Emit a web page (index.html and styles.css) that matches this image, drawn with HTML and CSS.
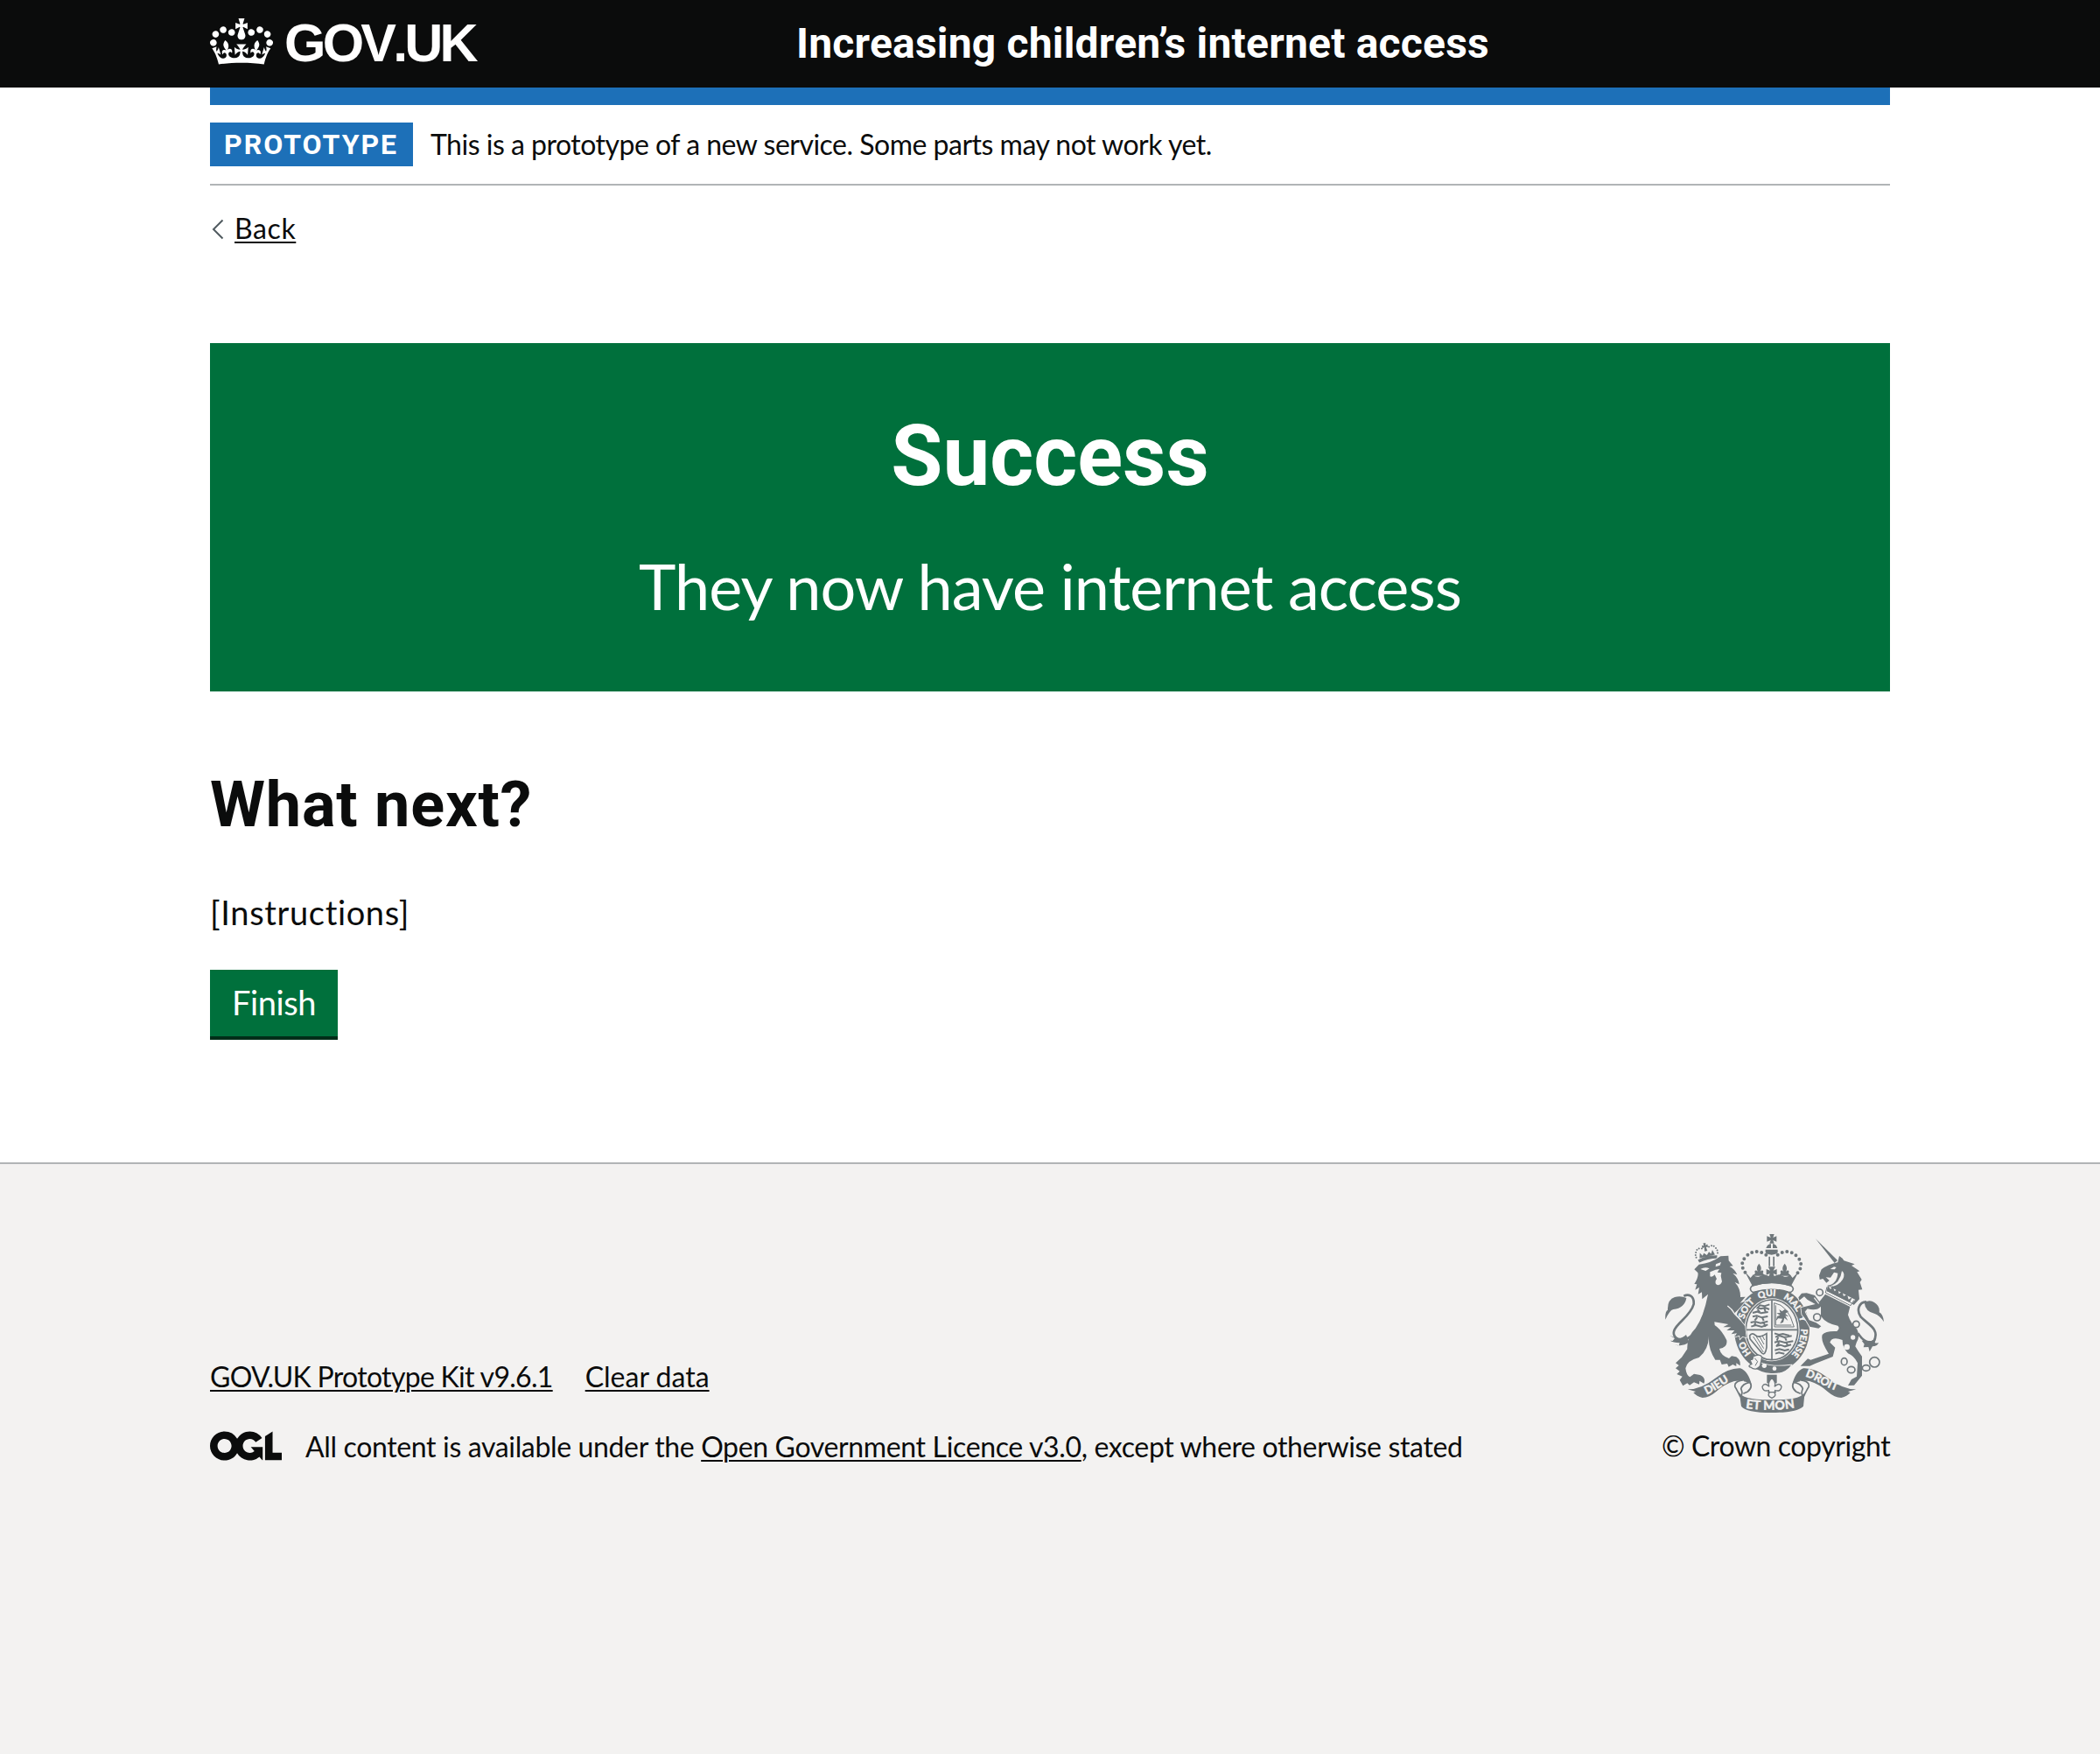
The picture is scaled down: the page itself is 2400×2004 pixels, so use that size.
FILE: index.html
```html
<!DOCTYPE html>
<html lang="en">
<head>
<meta charset="utf-8">
<title>Success - Increasing children’s internet access</title>
<link rel="stylesheet" href="styles.css">
</head>
<body>
<header class="header">
  <div class="container header-row">
    <a class="logo" href="#">
      <svg class="crown" viewBox="0 0 132 97" aria-hidden="true"><path d="M25 30.2c3.5 1.5 7.7-.2 9.1-3.7 1.5-3.6-.2-7.8-3.9-9.2-3.6-1.4-7.6.3-9.1 3.9-1.4 3.5.3 7.5 3.9 9zM9 39.5c3.6 1.5 7.8-.2 9.2-3.7 1.5-3.6-.2-7.8-3.9-9.1-3.6-1.5-7.6.2-9.1 3.8-1.4 3.5.3 7.5 3.8 9zM4.4 57.2c3.5 1.5 7.7-.2 9.1-3.8 1.5-3.6-.2-7.7-3.9-9.1-3.5-1.5-7.6.3-9.1 3.8-1.4 3.5.3 7.6 3.9 9.1zm38.3-21.4c3.5 1.5 7.7-.2 9.1-3.8 1.5-3.6-.2-7.7-3.9-9.1-3.6-1.5-7.6.3-9.1 3.8-1.3 3.6.4 7.7 3.9 9.1zm64.4-5.6c-3.6 1.5-7.8-.2-9.1-3.7-1.5-3.6.2-7.8 3.8-9.2 3.6-1.4 7.7.3 9.2 3.9 1.3 3.5-.4 7.5-3.9 9zm15.9 9.3c-3.6 1.5-7.7-.2-9.1-3.7-1.5-3.6.2-7.8 3.7-9.1 3.6-1.5 7.7.2 9.2 3.8 1.5 3.5-.3 7.5-3.8 9zm4.7 17.7c-3.6 1.5-7.8-.2-9.2-3.8-1.5-3.6.2-7.7 3.9-9.1 3.6-1.5 7.7.3 9.2 3.8 1.3 3.5-.4 7.6-3.9 9.1zM89.3 35.8c-3.6 1.5-7.8-.2-9.2-3.8-1.4-3.6.2-7.7 3.9-9.1 3.6-1.5 7.7.3 9.2 3.8 1.4 3.6-.3 7.7-3.9 9.1zM69.7 17.7l8.9 4.7V9.3l-8.9 2.8c-.2-.3-.5-.6-.9-.9L72.4 0H59.6l3.5 11.2c-.3.3-.6.5-.9.9l-8.8-2.8v13.1l8.8-4.7c.3.3.6.7.9.9l-5 15.4v.1c-.2.8-.4 1.6-.4 2.4 0 4.1 3.1 7.5 7 8.1h.2c.3 0 .7.1 1 .1.4 0 .7 0 1-.1h.2c4-.6 7.1-4.1 7.1-8.1 0-.8-.1-1.7-.4-2.4V34l-5.1-15.4c.4-.2.7-.6 1-.9zM66 92.8c16.9 0 32.8 1.1 47.1 3.2 4-16.9 8.9-26.7 14-33.5l-9.6-3.4c1 4.9 1.1 7.2 0 10.2-1.5-1.4-3-4.3-4.2-8.7L108.6 76c2.8-2 5-3.2 7.5-3.3-4.4 9.4-10 11.9-13.6 11.2-4.3-.8-6.3-4.6-5.6-7.9 1-4.7 5.7-5.9 8-.5 4.3-8.7-3-11.4-7.6-8.8 7.1-7.2 7.9-13.5 2.1-21.1-8 6.1-8.1 12.3-4.5 20.8-4.7-5.4-12.1-2.5-9.5 6.2 3.4-5.2 7.9-2 7.2 3.1-.6 4.3-6.4 7.8-13.5 7.2-10.3-.9-10.9-8-11.2-13.8 2.5-.5 7.1 1.8 11 7.3L80.2 60c-4.1 4.4-8 5.3-12.3 5.4 1.4-4.4 8-11.6 8-11.6H55.5s6.4 7.2 7.9 11.6c-4.2-.1-8-1-12.3-5.4l1.4 16.4c3.9-5.5 8.5-7.7 10.9-7.3-.3 5.8-.9 12.8-11.1 13.8-7.2.6-12.9-2.9-13.5-7.2-.7-5 3.8-8.3 7.1-3.1 2.7-8.7-4.6-11.6-9.4-6.2 3.7-8.5 3.6-14.7-4.6-20.8-5.8 7.6-5 13.9 2.2 21.1-4.7-2.6-11.9.1-7.7 8.8 2.3-5.5 7.1-4.2 8.1.5.7 3.3-1.3 7.1-5.7 7.9-3.5.7-9-1.8-13.5-11.2 2.5.1 4.7 1.3 7.5 3.3l-4.7-15.4c-1.2 4.4-2.7 7.2-4.3 8.7-1.1-3-.9-5.3 0-10.2l-9.5 3.4c5 6.9 9.9 16.7 14 33.5 14.8-2.1 30.8-3.2 47.7-3.2z"/></svg>
      <span class="wordmark">GOV.UK</span>
    </a>
    <a class="service" href="#">Increasing children’s internet access</a>
  </div>
</header>
<div class="container">
  <div class="bar"></div>
  <div class="phase">
    <strong class="tag">PROTOTYPE</strong>
    <span class="phase-text">This is a prototype of a new service. Some parts may not work yet.</span>
  </div>
  <a class="back" href="#">
    <svg class="chevron" viewBox="0 0 14 24" aria-hidden="true"><path d="M12.500 1.500 2 12l10.500 10.500"/></svg>
    <span class="back-text">Back</span>
  </a>
  <main class="main">
    <section class="panel">
      <h1 class="panel-title">Success</h1>
      <div class="panel-body">They now have internet access</div>
    </section>
    <h2 class="heading">What next?</h2>
    <p class="para">[Instructions]</p>
    <button class="button">Finish</button>
  </main>
</div>
<footer class="footer">
  <div class="container footer-row">
    <div class="meta">
      <div class="links"><a class="kit" href="#">GOV.UK Prototype Kit v9.6.1</a><a href="#">Clear data</a></div>
      <div class="licence">
        <svg class="ogl" viewBox="0 0 483.2 195.7" aria-hidden="true"><path d="M421.5 142.8V.1l-50.7 32.3v161.1h112.4v-50.7zm-122.3-9.6A47.12 47.12 0 0 1 221 97.8c0-26 21.1-47.1 47.1-47.1 16.7 0 31.4 8.7 39.7 21.8l42.7-27.2A97.63 97.63 0 0 0 268.1 0c-36.5 0-68.3 20.1-85.1 49.7A98 98 0 0 0 97.8 0C43.9 0 0 43.9 0 97.8s43.9 97.8 97.8 97.8c36.5 0 68.3-20.1 85.1-49.7a97.76 97.76 0 0 0 149.6 25.4l19.4 22.2h3v-87.8h-80l24.3 27.5zM97.8 145c-26 0-47.1-21.1-47.1-47.1s21.1-47.1 47.1-47.1 47.1 21.1 47.1 47.1S123.8 145 97.8 145"/></svg>
        <span class="licence-text">All content is available under the <a href="#">Open Government Licence v3.0</a>, except where otherwise stated</span>
      </div>
    </div>
    <div class="copyright">
      <svg class="arms" viewBox="60 51 780 630" aria-hidden="true">
        <defs>
          <path id="garter" pathLength="360" d="M438 502A100 115 0 0 1 438 272A100 115 0 0 1 438 502"/>
          <path id="dieu" d="M214 610C255 594 280 564 330 548"/>
          <path id="droit" d="M552 548C592 558 622 590 690 606"/>
          <path id="mon" d="M348 656Q437 670 536 652"/>
          <path id="fleur" d="M0-22C10-10 8-2 4 6C12-4 18 4 13 11L22 20H-22L-13 11C-18 4-12-4-4 6C-8-2-10-10 0-22Z"/>
        </defs>
        <!-- royal crown -->
        <path d="M430 60h16l-4 12 12-5v19l-12-5 4 11h-16l4-11-13 5v-19l13 5z"/>
        <path d="M431 94h4v14h-17q3-10 13-14zM441 94h4q10 4 12 14h-16zM416 113h42v10q-5 7-21 8-16-1-21-8z"/>
        <path class="beads" d="M418 131Q380 106 348 138Q322 168 354 200M458 131Q494 106 526 138Q552 168 520 200"/>
        <path d="M427 137h5v33h-5zM442 137h5v33h-5z"/>
        <use href="#fleur" x="394" y="183"/><use href="#fleur" x="482" y="183"/>
        <path d="M425 172h25l-7 13 12-5v20l-12-5 4 12h-20l4-12-12 5v-20l13 5z"/>
        <path d="M345 188l20 22 9-11q10 12 24 5l15-5 24 8 24-8 15 5q14 7 24-5l9 11 21-22-27 51q-65-22-131 0z"/>
        <path class="line" d="M372 236Q437 217 503 236Q520 248 502 260Q437 240 373 260Q356 248 372 236Z"/>
        <!-- garter and shield -->
        <ellipse cx="438" cy="387" rx="129" ry="145"/>
        <path class="paper" d="M373 246Q437 228 504 246L498 257Q437 238 378 256Z"/>
        <ellipse class="paper" cx="438" cy="388" rx="95" ry="108"/>
        <g class="motto">
          <text><textPath href="#garter" startOffset="43">HO</textPath></text>
          <text><textPath href="#garter" startOffset="109">SOIT</textPath></text>
          <text><textPath href="#garter" startOffset="156">QUI</textPath></text>
          <text><textPath href="#garter" startOffset="201">MAL</textPath></text>
          <text><textPath href="#garter" startOffset="246">Y</textPath></text>
          <text><textPath href="#garter" startOffset="269">PENSE</textPath></text>
        </g>
        <ellipse class="line" cx="438" cy="388" rx="89" ry="103"/>
        <path class="line" d="M438 286v206M349 388h178"/>
        <path class="rough" d="M430 301l-18 6-15-3-8 9 12 3 14-4 14 6M389 318l8 10M412 314l4 12M372 330l15-4 14 5 24-4M372 343l14-3 18 6 20-4M388 345l-9 11M405 346l5 11M365 363l16-3 18 5 25-6M367 377l16-5 20 6 21-8M382 364l-6 12M410 363l6 15"/>
        <path class="rough" d="M447 400l15 5 14-3 22 6M450 413l14-5 17 6 25-5M460 413l-5 12M482 413l6 12M447 431l17-4 19 5 28-5M452 444l15-4 16 5 21-6M463 431l-8 13M487 430l6 14M448 458l16-4 18 5 15-4M450 470l12-4 19 4"/>
        <path class="thin" d="M446 296Q494 303 514 378H447ZM451 304V372H505"/>
        <path d="M463 318l10 7 9-7 13 7-11 8 12 10-12-3 9 17-12-10-4 15-11 5 8-17-14-1-8 8 4-15 10-4-12-7 13-1z"/>
        <path class="line" d="M362 408Q370 396 382 407T420 401V448Q415 478 404 468L363 419Z"/>
        <path class="thin" d="M374 411l35 54M384 410l26 42M395 409l16 29M405 408l8 15"/>
        <!-- belt and buckle -->
        <path class="halo" d="M378 486Q407 520 504 509Q483 540 435 537Q398 534 369 513Z"/>
        <path class="fleurline" d="M373 480Q397 468 404 482L398 511Q384 531 365 516Q353 513 369 505L362 489Q375 494 373 480Z"/>
        <path class="thin" d="M379 485l10 12-8 14"/>
        <circle class="paper" cx="412" cy="511" r="8"/><circle class="paper" cx="447" cy="521" r="7"/>
        <path d="M421 542h34v29h-34z"/>
        <path class="fleurline" d="M438 553Q454 570 447 583Q464 566 471 583Q470 601 449 596L447 604Q455 615 438 622Q421 615 429 604L427 596Q406 601 405 583Q413 566 429 583Q422 570 438 553ZM424 602H453"/>
        <!-- lion -->
        <g transform="rotate(-13 214 126)">
          <path d="M180 141Q214 133 248 141L245 151Q214 144 183 151ZM187 137l5-18 7 12 6-8 9 9 9-9 6 8 7-12 5 18zM210 90h9l-2 8 7-2v10l-7-2 2 14h-10l2-14-7 2v-10l7 2z"/>
          <path class="beads small" d="M202 106Q185 100 179 115Q172 128 180 140M227 106Q243 100 249 115Q256 128 248 140"/>
        </g>
        <path class="halo" d="M172 181L188 164Q230 160 262 136L289 134 290 151 305 169 293 171Q312 181 319 199L304 194Q324 211 326 232L311 225Q331 247 330 276L347 275 329 296 347 290 326 315 310 331 346 376 350 414 337 411 329 419 327 407 309 413 318 400 299 403 310 390 283 390 298 379 271 379 289 369 241 361 242 372Q266 388 283 424Q287 449 258 453Q263 477 291 486L300 478 316 481Q332 492 329 511L316 502 316 513 304 507 290 515 285 504 266 507 260 491 244 491Q218 451 222 408Q221 457 188 483Q147 493 142 520Q145 545 157 550L171 539 192 543Q213 553 205 572L190 563 189 575 171 568 156 578 148 571 133 580 122 560 131 548 112 540 122 530 108 520 119 510 108 502 129 482 148 454Q146 413 176 383Q204 344 219 266L199 283 198 259 185 266 189 243 175 251 181 232 172 231Q188 205 184 192Z"/>
        <path class="paper" d="M193 180Q209 171 224 178L211 186ZM246 163l18-7-4 11-15 5zM226 190l19-8 13-2-7 11 14 2-2 10 4 20q-8 18-21 8-4-9 3-17l-7-15q-8 10-16 6z"/>
        <path class="paperline" d="M286 306Q302 317 310 333L333 356"/>
        <path class="limb" d="M165 407C126 438 94 414 103 391C111 364 159 342 170 300C172 270 152 265 136 272"/>
        <path d="M73 353Q71 325 81 320Q79 285 105 276Q127 271 145 279Q139 314 100 318Q87 321 73 353ZM88 408l17 9-7 9-9-1q10 6 33 8l-3 9-15-4q28 10 50-8l-10-25q-20 18-39 9z"/>
        <!-- unicorn -->
        <path d="M588 76L663 150 653 159Z"/>
        <path d="M600 202L608 181Q632 163 664 157L669 135 680 143 685 151 722 163 711 168 739 187 730 190 746 216 740 225 748 250 735 251 738 283 719 303 628 236Q661 232 664 194L651 191 639 209 623 208 635 219 625 227 613 213 602 216Z"/>
        <path class="paper" d="M638 180l13-8 8 2-6 7zM678 186q13 10 3 29-16 25-45 25 37-12 42-54z"/>
        <path class="paper" d="M626 235L724 285 706 307 620 262Z"/>
        <path class="thin" d="M627 241L622 261 708 305 720 286M627 254L713 297"/>
        <path d="M630 235l9 15 7-12 7 18 11-9 4 18 11-9 5 17 12-7 5 18 13-8-9 18-79-39z"/>
        <path class="halo" d="M621 266L706 309 699 337Q707 364 730 386Q742 410 728 432L724 445Q738 468 747 479L747 545 720 578 699 579 711 558 729 548 732 502Q720 477 699 469Q679 447 680 423Q644 410 637 431L655 449 647 480 586 504 568 512 536 512 561 487 571 491 633 470Q604 427 611 405Q622 391 661 393Q673 383 664 374Q623 366 606 341L606 308Q593 324 560 316L551 326 566 355 590 364 607 376 598 383 568 377 551 348 541 336 538 312 587 300 560 285 549 274 532 287 529 277 540 263 557 262 585 270 601 292Z"/>
        <circle class="line" cx="602" cy="260" r="11"/>
        <path class="paperline" d="M583 278l16 20"/>
        <ellipse class="ring" cx="593" cy="345" rx="12" ry="12"/>
        <circle class="paper" cx="716" cy="414" r="8"/><circle class="paper" cx="695" cy="447" r="10"/>
        <circle class="ring" cx="727" cy="369" r="11"/><ellipse class="line" cx="686" cy="497" rx="10" ry="12"/><ellipse class="line" cx="710" cy="525" rx="13" ry="11"/><ellipse class="line" cx="761" cy="519" rx="13" ry="10"/><circle class="line" cx="790" cy="499" r="17"/>
        <path class="limb" d="M762 292C736 293 727 321 743 344C768 370 809 386 788 426Q762 443 733 400"/>
        <path d="M822 361Q820 335 806 328Q809 306 789 294Q774 283 755 294Q758 326 791 333Q807 338 822 361ZM746 425l9 12-3 11 17-1 4 16 10-18q16 0 21-13-11 4-13-1l5-14-17 9z"/>
        <!-- motto ribbon -->
        <path d="M149 592Q195 593 247 552Q291 518 330 520Q357 529 370 581Q348 557 309 564Q275 574 244 602Q224 619 200 621Q180 616 169 604L177 600Z"/>
        <path transform="matrix(-1 0 0 1 876 0)" d="M149 592Q195 593 247 552Q291 518 330 520Q357 529 370 581Q348 557 309 564Q275 574 244 602Q224 619 200 621Q180 616 169 604L177 600Z"/>
        <path class="ribbon-fold" d="M342 560Q306 565 312 584Q317 591 329 616Q341 610 332 590Q337 573 362 568Q374 585 355 600L340 607M534 560Q570 565 564 584Q559 591 547 616Q535 610 544 590Q539 573 514 568Q502 585 521 600L536 607"/>
        <path d="M326 600Q332 629 437 628Q544 629 551 600L546 650Q525 672 437 672Q350 672 333 650Z"/>
        <g class="motto big">
          <text><textPath href="#dieu">DIEU</textPath></text>
          <text><textPath href="#droit">DROIT</textPath></text>
          <text class="wide"><textPath href="#mon">ET MON</textPath></text>
        </g>
      </svg>
      <span>© Crown copyright</span>
    </div>
  </div>
</footer>
</body>
</html>
```
FILE: styles.css
```css
* { box-sizing: border-box; }
body {
  margin: 0;
  min-height: 2004px;
  display: flex;
  flex-direction: column;
  background: #fff;
  color: #0b0c0c;
  font-family: Lato, "Noto Sans", sans-serif;
  font-size: 32px;
  font-variant-ligatures: none;
}
a { color: inherit; text-decoration-thickness: 2px; text-underline-offset: 3px; }
.container { width: 1920px; margin: 0 auto; }
.header { height: 100px; background: #0b0c0c; color: #fff; }
.header a { text-decoration: none; }
.header-row { display: grid; grid-template-columns: 670px 1fr; }
.logo { display: flex; gap: 13px; padding-top: 21px; }
.crown { width: 72px; height: 53px; fill: #fff; }
.wordmark { font: bold 61px/57px "Liberation Sans", Arial, sans-serif; font-kerning: none; letter-spacing: -3.8px; }
.service, .tag, .panel-title, .heading { font-family: Roboto, sans-serif; font-weight: 700; }
.service { font-size: 48px; line-height: 99px; letter-spacing: .2px; }
.bar { height: 20px; background: #1d70b8; }
.phase { display: flex; gap: 20px; height: 92px; padding: 20px 0; border-bottom: 2px solid #b1b4b6; }
.phase-text { line-height: 49px; letter-spacing: -.5px; }
.tag { width: 232px; height: 50px; padding-left: 16px; background: #1d70b8; color: #fff; line-height: 50px; letter-spacing: 2px; }
.back { display: flex; width: max-content; height: 40px; margin-top: 28px; gap: 12px; padding-left: 2px; line-height: 42px; text-decoration: none; }
.chevron { width: 14px; height: 24px; margin-top: 10px; fill: none; stroke: #505a5f; stroke-width: 2; }
.back-text { letter-spacing: .6px; text-decoration: underline; text-decoration-thickness: 2px; text-underline-offset: 3px; }
.main { padding-top: 112px; }
.panel { height: 398px; padding-top: 74px; background: #00703c; color: #fff; text-align: center; }
.panel-title { margin: 0 0 43px; font-size: 96px; line-height: 110px; }
.panel-body { font-size: 72px; line-height: 100px; letter-spacing: -.95px; }
.heading { margin: 90px 0 0; font-size: 72px; line-height: 80px; letter-spacing: .8px; }
.para { margin: 57px 0 0; font-size: 38px; line-height: 50px; letter-spacing: .65px; }
.button { display: block; width: 146px; height: 76px; margin: 41px 0 0; padding: 0 0 1px; border: 0; background: #00703c; box-shadow: 0 4px 0 #002d18; color: #fff; font: 38px/73px Lato, sans-serif; letter-spacing: -.4px; }
.footer { flex: 1; margin-top: 144px; padding-top: 77px; border-top: 2px solid #b1b4b6; background: #f3f2f1; }
.footer-row { display: flex; justify-content: space-between; align-items: flex-end; line-height: 42px; }
.links { display: flex; gap: 37px; margin-bottom: 38px; }
.kit { letter-spacing: -.7px; }
.licence { display: flex; gap: 27px; height: 41px; }
.licence-text { letter-spacing: -.35px; }
.ogl { width: 82px; height: 34px; margin-top: 3px; fill: #0b0c0c; }
.copyright { width: 261px; height: 266px; display: flex; flex-direction: column; gap: 14px; white-space: nowrap; letter-spacing: -.42px; }
.arms { flex: none; width: 260px; height: 210px; fill: #6f777b; }
.arms .paper { fill: #f3f2f1; }
.arms .line { fill: none; stroke: #6f777b; stroke-width: 5; }
.arms .ring { fill: #f3f2f1; stroke: #6f777b; stroke-width: 5; }
.arms .thin { fill: none; stroke: #6f777b; stroke-width: 3; }
.arms .rough { fill: none; stroke: #6f777b; stroke-width: 6; }
.arms .limb { fill: none; stroke: #6f777b; stroke-width: 8; }
.arms .paperline { fill: none; stroke: #f3f2f1; stroke-width: 4; }
.arms .fleurline { fill: #f3f2f1; stroke: #6f777b; stroke-width: 4; }
.arms .ribbon-fold { fill: #f3f2f1; stroke: #6f777b; stroke-width: 5; }
.arms .halo { stroke: #f3f2f1; stroke-width: 5; paint-order: stroke; }
.arms .beads { fill: none; stroke: #6f777b; stroke-width: 12; stroke-linecap: round; stroke-dasharray: 0 17; }
.arms .small { stroke-width: 6; stroke-dasharray: 0 9; }
.motto { fill: #f3f2f1; stroke: #f3f2f1; stroke-width: 1.5px; font: 700 31px Lato, sans-serif; letter-spacing: 0; }
.big { font-size: 38px; }
.wide { font-size: 42px; letter-spacing: 1px; }
```
